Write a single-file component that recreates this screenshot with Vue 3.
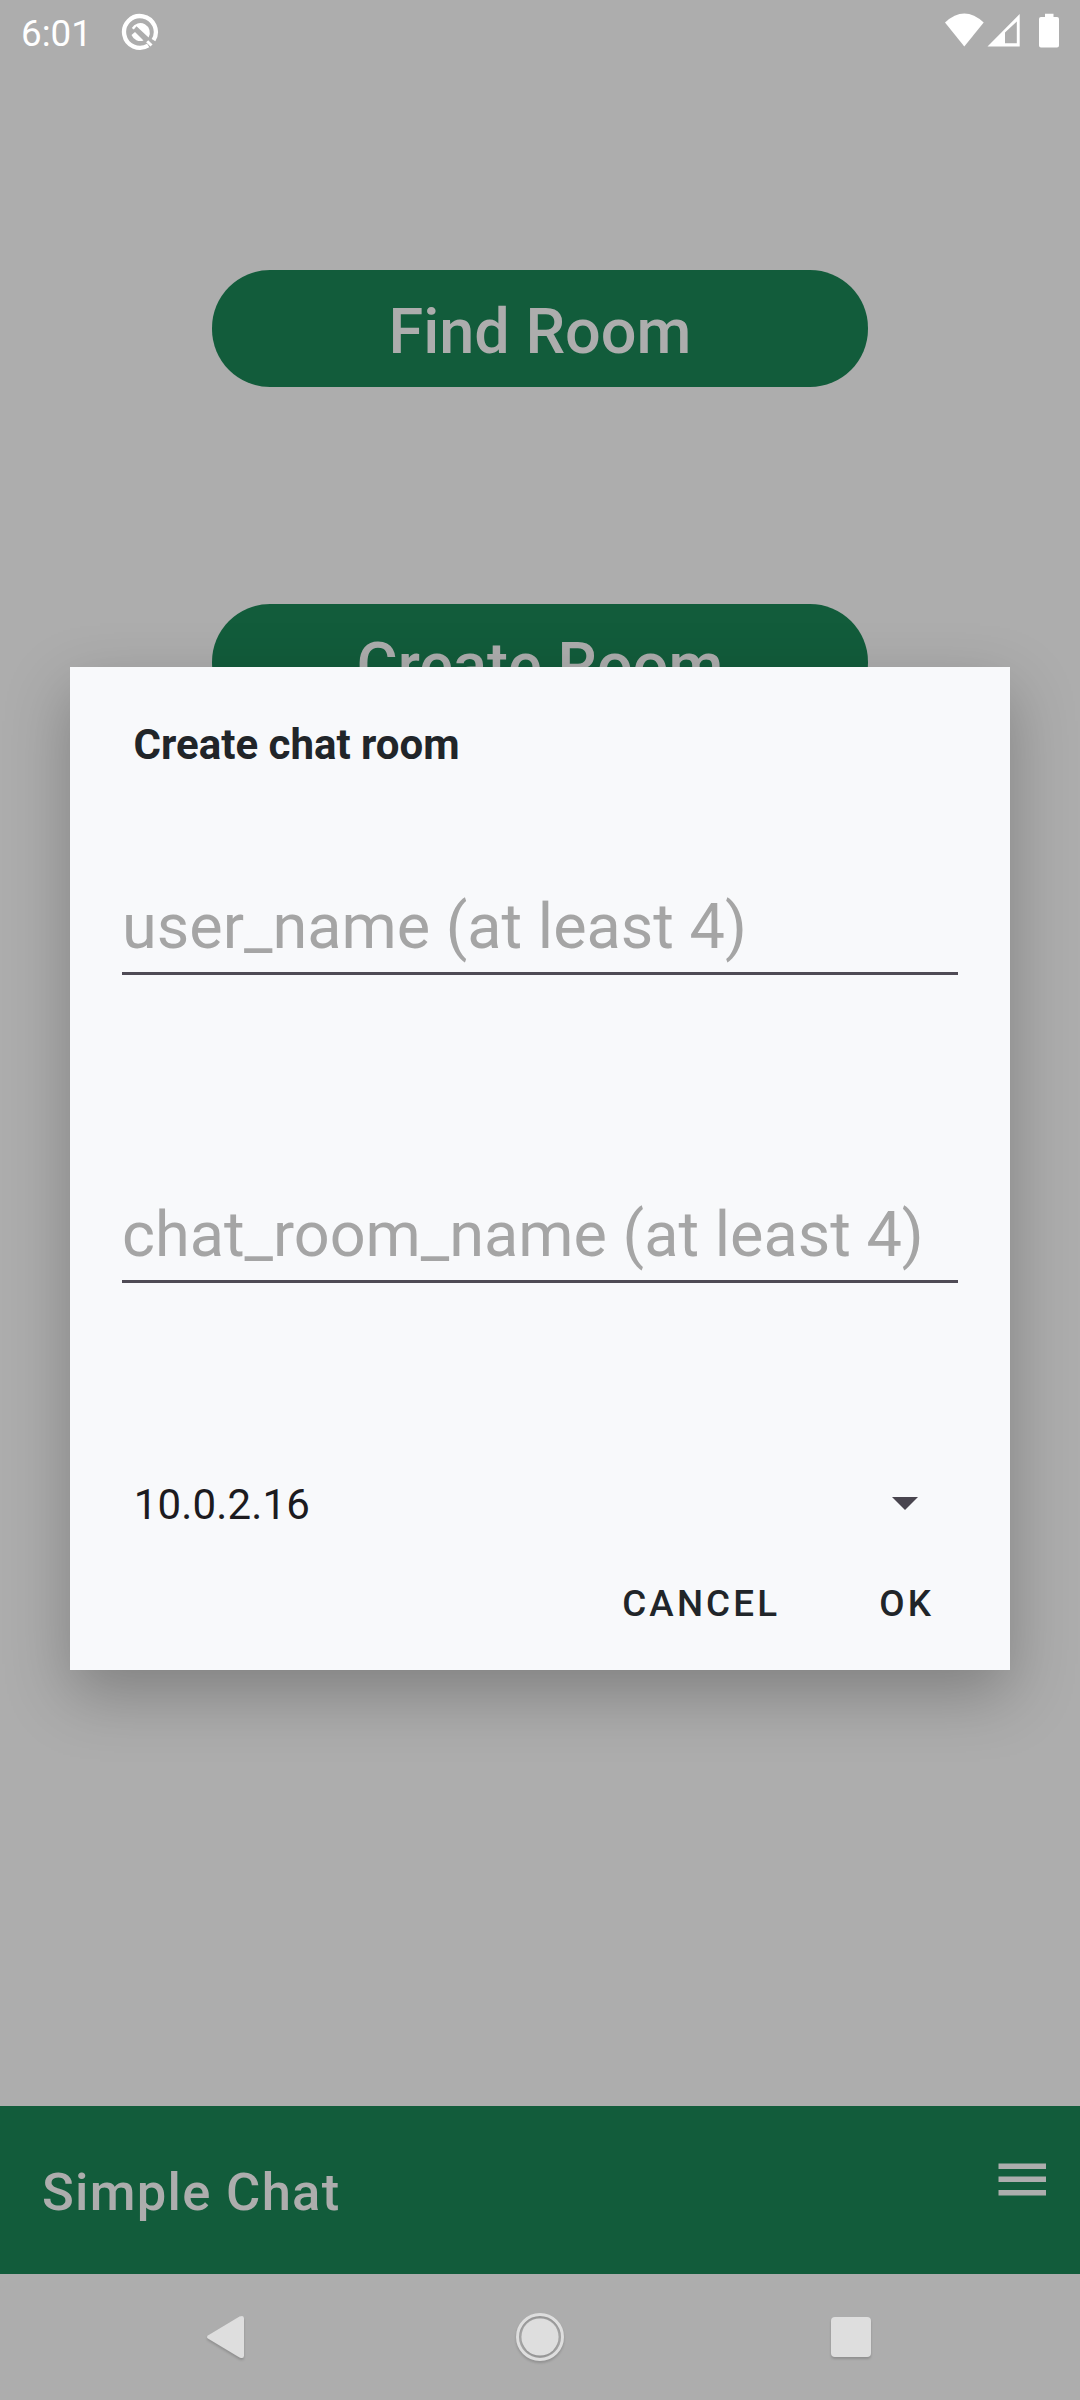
<script setup>
const hints = ['user_name (at least 4)', 'chat_room_name (at least 4)']
</script>

<template>
  <div class="screen">
    <header class="status">
      <span class="time">6:01</span>
      <svg class="q" width="38" height="38" viewBox="0 0 38 38">
        <path d="M27.200 32.500A15.900 15.900 0 1 1 32.500 27.200" fill="none" stroke="#fff" stroke-width="4.300" />
        <path d="M26.200 28.200L30.500 32.500" stroke="#fff" stroke-width="3" />
        <path d="M10.800 15A9.600 9.600 0 1 1 27.600 24.400L15.500 13.200L12.800 16.500Z" fill="#fff" />
        <path d="M10.500 22L14 19L22.500 27.500A9.600 9.600 0 0 1 10.500 22Z" fill="#fff" />
      </svg>
      <span class="spacer"></span>
      <svg width="136" height="40" viewBox="0 0 136 40">
        <path d="M1 9.500Q20.300-8.500 39.700 9.500L20.300 33.500Z" fill="#fff" />
        <path d="M43.500 33.500L75.700 1V33.500ZM61 19.500V30.200H72.800V8.500Z" fill="#fff" fill-rule="evenodd" />
        <path d="M101 .8H109.500V4H113Q115 4 115 6V32.500Q115 34.500 113 34.500H97Q95 34.500 95 32.500V6Q95 4 97 4H101Z" fill="#fff" />
      </svg>
    </header>
    <main class="content">
      <button class="room">Find Room</button>
      <button class="room">Create Room</button>
    </main>
    <footer class="bar">
      <span class="brand">Simple Chat</span>
      <svg class="menu" width="48" height="34" viewBox="0 0 48 34">
        <path d="M.5 .5H48V6H.5ZM.5 13.500H48V19H.5ZM.5 27H48V32.500H.5Z" fill="#adadad" />
      </svg>
    </footer>
    <nav class="nav">
      <svg width="1080" height="126" viewBox="0 0 1080 126">
        <g fill="#dedede" class="keys">
          <path d="M208.300 61.200L239.500 42.600Q244 40.500 244 44.500V81.500Q244 85.500 239.500 83.400L208.300 64.800Q205.700 63 208.300 61.200Z" />
          <circle cx="540" cy="63" r="18.600" />
          <circle cx="540" cy="63" r="22.500" fill="none" stroke="#dedede" stroke-width="3" />
          <rect x="831" y="43" width="40" height="40" rx="4" />
        </g>
      </svg>
    </nav>
    <section class="dialog">
      <h1>Create chat room</h1>
      <div v-for="h in hints" :key="h" class="field"><span>{{ h }}</span></div>
      <div class="spinner">
        <span>10.0.2.16</span>
        <svg width="26" height="13" viewBox="0 0 26 13"><path d="M0 0H26L13 13Z" fill="#49454f" /></svg>
      </div>
      <div class="actions">
        <span>CANCEL</span>
        <span>OK</span>
      </div>
    </section>
  </div>
</template>

<style>
body { margin: 0; background: #adadad; }
</style>

<style scoped>
.screen {
  position: relative;
  width: 1080px;
  height: 2400px;
  display: flex;
  flex-direction: column;
  background: #adadad;
  font-family: Roboto, sans-serif;
  overflow: hidden;
}
.status {
  height: 63px;
  display: flex;
  align-items: flex-start;
  box-sizing: border-box;
  padding: 12px 0 0 21px;
  color: #fff;
}
.time { width: 100px; font-size: 36.75px; line-height: 43px; }
.spacer { flex: 1; }
.status svg { margin-top: 1px; }
.content { flex: 1; display: flex; flex-direction: column; align-items: center; padding-top: 207px; gap: 217px; }
.room {
  width: 656px;
  height: 117px;
  border: 0;
  padding: 6px 0 0;
  border-radius: 58px;
  background: #125c3b;
  color: #adadad;
  font: 500 63px/74px Roboto, sans-serif;
}
.bar {
  height: 168px;
  display: flex;
  justify-content: space-between;
  box-sizing: border-box;
  padding: 55px 34px 0 42px;
  background: #125c3b;
}
.brand { font-size: 52.5px; font-weight: 500; line-height: 62px; color: #adadad; letter-spacing: 1.3px; }
.menu { margin-top: 2px; }
.nav { height: 126px; }
.nav svg { display: block; }
.keys { filter: drop-shadow(0 2px 1px rgba(0, 0, 0, .17)); }
.dialog {
  position: absolute;
  left: 70px;
  top: 667px;
  width: 940px;
  height: 1003px;
  box-sizing: border-box;
  padding: 53px 52px 0;
  background: #f8f9fb;
  box-shadow: 0 24px 60px rgba(0, 0, 0, .26);
}
h1 { margin: 0 0 103px; padding-left: 11.6px; font-size: 42px; line-height: 49px; font-weight: 700; color: #212529; }
.field {
  height: 103px;
  margin-bottom: 205px;
  border-bottom: 3px solid #4f4b55;
  box-sizing: border-box;
  color: #a5a5a5;
  font-size: 63px;
  line-height: 110px;
  white-space: nowrap;
}
.spinner {
  margin-top: -8px;
  height: 50px;
  padding: 0 40px 0 11.7px;
  display: flex;
  align-items: center;
  justify-content: space-between;
  font-size: 42px;
  line-height: 50px;
  color: #1c1b1f;
  letter-spacing: 0.15px;
}
.spinner svg { margin-bottom: 4px; }
.actions {
  margin-top: 52px;
  display: flex;
  justify-content: flex-end;
  gap: 99px;
  padding-right: 24px;
  font-size: 36.75px;
  font-weight: 500;
  line-height: 44px;
  letter-spacing: 3.15px;
  color: #212529;
}
</style>
